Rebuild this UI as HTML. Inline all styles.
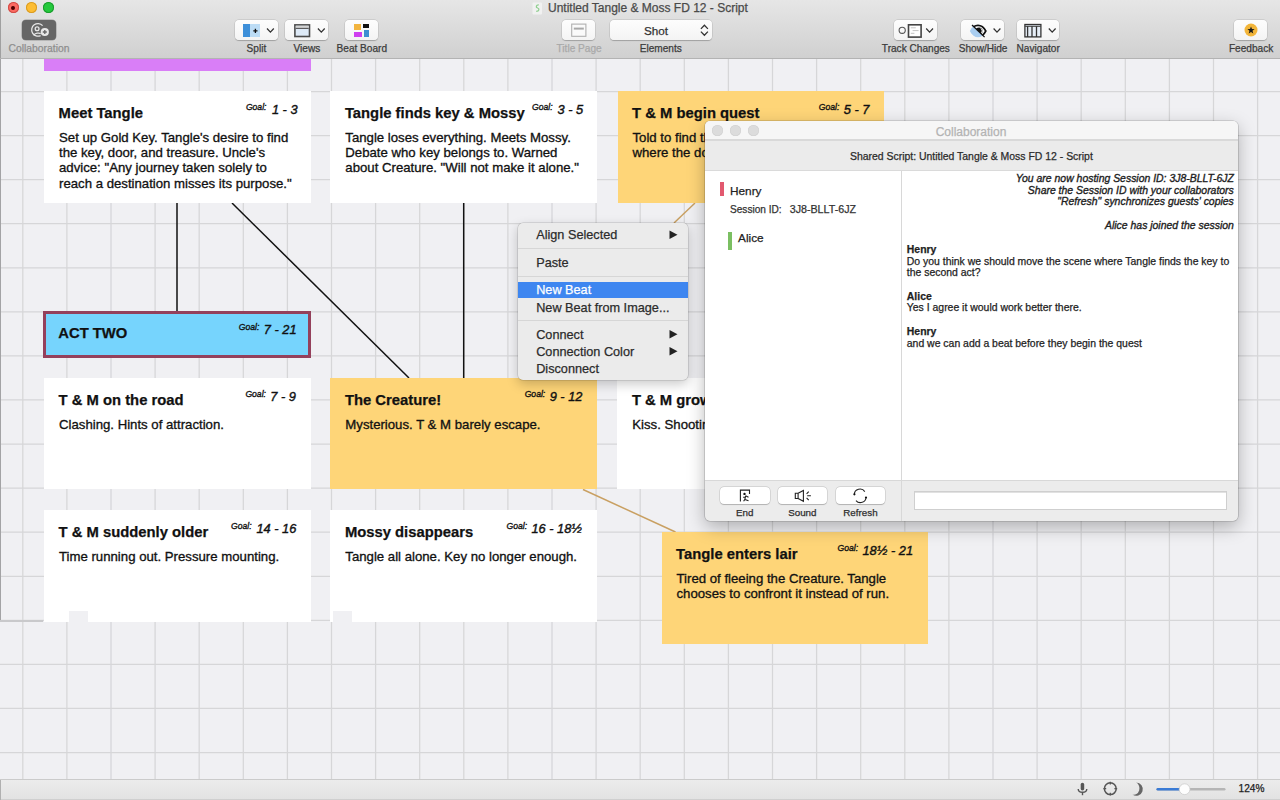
<!DOCTYPE html>
<html><head><meta charset="utf-8"><title>Beat Board</title>
<style>
html,body{margin:0;padding:0;width:1280px;height:800px;overflow:hidden;background:#f0f0f3;font-family:"Liberation Sans", sans-serif;}
.t{position:absolute;white-space:nowrap;-webkit-text-stroke:0.25px currentColor;}
.r{position:absolute;}
svg{position:absolute;left:0;top:0;}
</style></head><body>

<svg width="1280" height="800" style="left:0;top:0"><line x1="22.80" y1="59" x2="22.80" y2="779" stroke="#d6d6d8" stroke-width="1.25"/><line x1="66.90" y1="59" x2="66.90" y2="779" stroke="#d6d6d8" stroke-width="1.25"/><line x1="111.00" y1="59" x2="111.00" y2="779" stroke="#d6d6d8" stroke-width="1.25"/><line x1="155.10" y1="59" x2="155.10" y2="779" stroke="#d6d6d8" stroke-width="1.25"/><line x1="199.20" y1="59" x2="199.20" y2="779" stroke="#d6d6d8" stroke-width="1.25"/><line x1="243.30" y1="59" x2="243.30" y2="779" stroke="#d6d6d8" stroke-width="1.25"/><line x1="287.40" y1="59" x2="287.40" y2="779" stroke="#d6d6d8" stroke-width="1.25"/><line x1="331.50" y1="59" x2="331.50" y2="779" stroke="#d6d6d8" stroke-width="1.25"/><line x1="375.60" y1="59" x2="375.60" y2="779" stroke="#d6d6d8" stroke-width="1.25"/><line x1="419.70" y1="59" x2="419.70" y2="779" stroke="#d6d6d8" stroke-width="1.25"/><line x1="463.80" y1="59" x2="463.80" y2="779" stroke="#d6d6d8" stroke-width="1.25"/><line x1="507.90" y1="59" x2="507.90" y2="779" stroke="#d6d6d8" stroke-width="1.25"/><line x1="552.00" y1="59" x2="552.00" y2="779" stroke="#d6d6d8" stroke-width="1.25"/><line x1="596.10" y1="59" x2="596.10" y2="779" stroke="#d6d6d8" stroke-width="1.25"/><line x1="640.20" y1="59" x2="640.20" y2="779" stroke="#d6d6d8" stroke-width="1.25"/><line x1="684.30" y1="59" x2="684.30" y2="779" stroke="#d6d6d8" stroke-width="1.25"/><line x1="728.40" y1="59" x2="728.40" y2="779" stroke="#d6d6d8" stroke-width="1.25"/><line x1="772.50" y1="59" x2="772.50" y2="779" stroke="#d6d6d8" stroke-width="1.25"/><line x1="816.60" y1="59" x2="816.60" y2="779" stroke="#d6d6d8" stroke-width="1.25"/><line x1="860.70" y1="59" x2="860.70" y2="779" stroke="#d6d6d8" stroke-width="1.25"/><line x1="904.80" y1="59" x2="904.80" y2="779" stroke="#d6d6d8" stroke-width="1.25"/><line x1="948.90" y1="59" x2="948.90" y2="779" stroke="#d6d6d8" stroke-width="1.25"/><line x1="993.00" y1="59" x2="993.00" y2="779" stroke="#d6d6d8" stroke-width="1.25"/><line x1="1037.10" y1="59" x2="1037.10" y2="779" stroke="#d6d6d8" stroke-width="1.25"/><line x1="1081.20" y1="59" x2="1081.20" y2="779" stroke="#d6d6d8" stroke-width="1.25"/><line x1="1125.30" y1="59" x2="1125.30" y2="779" stroke="#d6d6d8" stroke-width="1.25"/><line x1="1169.40" y1="59" x2="1169.40" y2="779" stroke="#d6d6d8" stroke-width="1.25"/><line x1="1213.50" y1="59" x2="1213.50" y2="779" stroke="#d6d6d8" stroke-width="1.25"/><line x1="1257.60" y1="59" x2="1257.60" y2="779" stroke="#d6d6d8" stroke-width="1.25"/><line x1="0" y1="91.50" x2="1280" y2="91.50" stroke="#d6d6d8" stroke-width="1.25"/><line x1="0" y1="135.57" x2="1280" y2="135.57" stroke="#d6d6d8" stroke-width="1.25"/><line x1="0" y1="179.64" x2="1280" y2="179.64" stroke="#d6d6d8" stroke-width="1.25"/><line x1="0" y1="223.71" x2="1280" y2="223.71" stroke="#d6d6d8" stroke-width="1.25"/><line x1="0" y1="267.78" x2="1280" y2="267.78" stroke="#d6d6d8" stroke-width="1.25"/><line x1="0" y1="311.85" x2="1280" y2="311.85" stroke="#d6d6d8" stroke-width="1.25"/><line x1="0" y1="355.92" x2="1280" y2="355.92" stroke="#d6d6d8" stroke-width="1.25"/><line x1="0" y1="399.99" x2="1280" y2="399.99" stroke="#d6d6d8" stroke-width="1.25"/><line x1="0" y1="444.06" x2="1280" y2="444.06" stroke="#d6d6d8" stroke-width="1.25"/><line x1="0" y1="488.13" x2="1280" y2="488.13" stroke="#d6d6d8" stroke-width="1.25"/><line x1="0" y1="532.20" x2="1280" y2="532.20" stroke="#d6d6d8" stroke-width="1.25"/><line x1="0" y1="576.27" x2="1280" y2="576.27" stroke="#d6d6d8" stroke-width="1.25"/><line x1="0" y1="620.34" x2="1280" y2="620.34" stroke="#d6d6d8" stroke-width="1.25"/><line x1="0" y1="664.41" x2="1280" y2="664.41" stroke="#d6d6d8" stroke-width="1.25"/><line x1="0" y1="708.48" x2="1280" y2="708.48" stroke="#d6d6d8" stroke-width="1.25"/><line x1="0" y1="752.55" x2="1280" y2="752.55" stroke="#d6d6d8" stroke-width="1.25"/></svg>
<div class="r" style="left:0.00px;top:0.00px;width:1.00px;height:621.00px;background:#a3a3a5;"></div>
<div class="r" style="left:0.00px;top:620.00px;width:43.00px;height:1.50px;background:#c9c9cb;"></div>
<div class="r" style="left:44.00px;top:59.00px;width:266.50px;height:11.50px;background:#d97ef7;"></div>
<svg width="1280" height="800">
<line x1="177" y1="203" x2="177" y2="311" stroke="#111" stroke-width="1.5"/>
<line x1="232" y1="203" x2="409" y2="378" stroke="#111" stroke-width="1.5"/>
<line x1="463.7" y1="203" x2="463.7" y2="378" stroke="#111" stroke-width="1.5"/>
<line x1="695" y1="203" x2="674" y2="223" stroke="#c9a062" stroke-width="1.5"/>
<line x1="583" y1="489.5" x2="675.5" y2="532" stroke="#c9a062" stroke-width="1.5"/>
</svg>
<div class="r" style="left:44.00px;top:91.00px;width:266.50px;height:111.50px;background:#ffffff;"></div>
<div class="t" style="top:105.97px;font-size:14.8px;line-height:14.8px;color:#111;font-weight:bold;left:58.60px;">Meet Tangle</div>
<div class="t" style="top:103.22px;font-size:8.6px;line-height:8.6px;color:#111;font-style:italic;left:245.90px;-webkit-text-stroke:0.35px #111;">Goal:</div>
<div class="t" style="top:104.36px;font-size:12.8px;line-height:12.8px;color:#111;font-style:italic;left:271.90px;-webkit-text-stroke:0.4px #111;">1 - 3</div>
<div class="t" style="top:130.62px;font-size:13.2px;line-height:13.2px;color:#111;left:59.00px;-webkit-text-stroke:0.32px #111;">Set up Gold Key. Tangle's desire to find</div>
<div class="t" style="top:145.92px;font-size:13.2px;line-height:13.2px;color:#111;left:59.00px;-webkit-text-stroke:0.32px #111;">the key, door, and treasure. Uncle's</div>
<div class="t" style="top:161.22px;font-size:13.2px;line-height:13.2px;color:#111;left:59.00px;-webkit-text-stroke:0.32px #111;">advice: "Any journey taken solely to</div>
<div class="t" style="top:176.52px;font-size:13.2px;line-height:13.2px;color:#111;left:59.00px;-webkit-text-stroke:0.32px #111;">reach a destination misses its purpose."</div>
<div class="r" style="left:330.30px;top:91.00px;width:266.70px;height:111.50px;background:#ffffff;"></div>
<div class="t" style="top:105.97px;font-size:14.8px;line-height:14.8px;color:#111;font-weight:bold;left:344.90px;">Tangle finds key &amp; Mossy</div>
<div class="t" style="top:103.22px;font-size:8.6px;line-height:8.6px;color:#111;font-style:italic;left:532.00px;-webkit-text-stroke:0.35px #111;">Goal:</div>
<div class="t" style="top:104.36px;font-size:12.8px;line-height:12.8px;color:#111;font-style:italic;left:557.50px;-webkit-text-stroke:0.4px #111;">3 - 5</div>
<div class="t" style="top:130.62px;font-size:13.2px;line-height:13.2px;color:#111;left:345.30px;-webkit-text-stroke:0.32px #111;">Tangle loses everything. Meets Mossy.</div>
<div class="t" style="top:145.92px;font-size:13.2px;line-height:13.2px;color:#111;left:345.30px;-webkit-text-stroke:0.32px #111;">Debate who key belongs to. Warned</div>
<div class="t" style="top:161.22px;font-size:13.2px;line-height:13.2px;color:#111;left:345.30px;-webkit-text-stroke:0.32px #111;">about Creature. "Will not make it alone."</div>
<div class="r" style="left:617.50px;top:91.00px;width:266.50px;height:111.50px;background:#fed578;"></div>
<div class="t" style="top:105.97px;font-size:14.8px;line-height:14.8px;color:#111;font-weight:bold;left:632.10px;">T &amp; M begin quest</div>
<div class="t" style="top:103.22px;font-size:8.6px;line-height:8.6px;color:#111;font-style:italic;left:818.75px;-webkit-text-stroke:0.35px #111;">Goal:</div>
<div class="t" style="top:104.36px;font-size:12.8px;line-height:12.8px;color:#111;font-style:italic;left:843.75px;-webkit-text-stroke:0.4px #111;">5 - 7</div>
<div class="t" style="top:130.62px;font-size:13.2px;line-height:13.2px;color:#111;left:632.50px;-webkit-text-stroke:0.32px #111;">Told to find the key and the door,</div>
<div class="t" style="top:145.92px;font-size:13.2px;line-height:13.2px;color:#111;left:632.50px;-webkit-text-stroke:0.32px #111;">where the door leads.</div>
<div class="r" style="left:43.00px;top:311.00px;width:268.30px;height:47.00px;background:#76d4fd;box-sizing:border-box;border:3.8px solid #94405b;"></div>
<div class="t" style="top:326.07px;font-size:14.8px;line-height:14.8px;color:#111;font-weight:bold;left:58.30px;">ACT TWO</div>
<div class="t" style="top:323.12px;font-size:8.6px;line-height:8.6px;color:#111;font-style:italic;left:238.80px;-webkit-text-stroke:0.35px #111;">Goal:</div>
<div class="t" style="top:323.66px;font-size:12.8px;line-height:12.8px;color:#111;font-style:italic;left:263.80px;-webkit-text-stroke:0.4px #111;">7 - 21</div>
<div class="r" style="left:44.00px;top:378.00px;width:266.50px;height:111.00px;background:#ffffff;"></div>
<div class="t" style="top:392.97px;font-size:14.8px;line-height:14.8px;color:#111;font-weight:bold;left:58.60px;">T &amp; M on the road</div>
<div class="t" style="top:390.22px;font-size:8.6px;line-height:8.6px;color:#111;font-style:italic;left:245.40px;-webkit-text-stroke:0.35px #111;">Goal:</div>
<div class="t" style="top:391.36px;font-size:12.8px;line-height:12.8px;color:#111;font-style:italic;left:270.30px;-webkit-text-stroke:0.4px #111;">7 - 9</div>
<div class="t" style="top:417.62px;font-size:13.2px;line-height:13.2px;color:#111;left:59.00px;-webkit-text-stroke:0.32px #111;">Clashing. Hints of attraction.</div>
<div class="r" style="left:330.30px;top:378.00px;width:266.70px;height:111.00px;background:#fed578;"></div>
<div class="t" style="top:392.97px;font-size:14.8px;line-height:14.8px;color:#111;font-weight:bold;left:344.90px;">The Creature!</div>
<div class="t" style="top:390.22px;font-size:8.6px;line-height:8.6px;color:#111;font-style:italic;left:524.70px;-webkit-text-stroke:0.35px #111;">Goal:</div>
<div class="t" style="top:391.36px;font-size:12.8px;line-height:12.8px;color:#111;font-style:italic;left:549.70px;-webkit-text-stroke:0.4px #111;">9 - 12</div>
<div class="t" style="top:417.62px;font-size:13.2px;line-height:13.2px;color:#111;left:345.30px;-webkit-text-stroke:0.32px #111;">Mysterious. T &amp; M barely escape.</div>
<div class="r" style="left:617.30px;top:378.00px;width:266.70px;height:111.00px;background:#ffffff;"></div>
<div class="t" style="top:392.97px;font-size:14.8px;line-height:14.8px;color:#111;font-weight:bold;left:631.90px;">T &amp; M grow closer</div>
<div class="t" style="top:390.22px;font-size:8.6px;line-height:8.6px;color:#111;font-style:italic;left:818.00px;-webkit-text-stroke:0.35px #111;">Goal:</div>
<div class="t" style="top:391.36px;font-size:12.8px;line-height:12.8px;color:#111;font-style:italic;left:843.00px;-webkit-text-stroke:0.4px #111;">10 - 12</div>
<div class="t" style="top:417.62px;font-size:13.2px;line-height:13.2px;color:#111;left:632.30px;-webkit-text-stroke:0.32px #111;">Kiss. Shooting star.</div>
<div class="r" style="left:44.00px;top:510.00px;width:266.50px;height:111.50px;background:#ffffff;"></div>
<div class="t" style="top:524.97px;font-size:14.8px;line-height:14.8px;color:#111;font-weight:bold;left:58.60px;">T &amp; M suddenly older</div>
<div class="t" style="top:522.22px;font-size:8.6px;line-height:8.6px;color:#111;font-style:italic;left:231.00px;-webkit-text-stroke:0.35px #111;">Goal:</div>
<div class="t" style="top:523.36px;font-size:12.8px;line-height:12.8px;color:#111;font-style:italic;left:256.50px;-webkit-text-stroke:0.4px #111;">14 - 16</div>
<div class="t" style="top:549.62px;font-size:13.2px;line-height:13.2px;color:#111;left:59.00px;-webkit-text-stroke:0.32px #111;">Time running out. Pressure mounting.</div>
<div class="r" style="left:330.30px;top:510.00px;width:266.70px;height:111.50px;background:#ffffff;"></div>
<div class="t" style="top:524.97px;font-size:14.8px;line-height:14.8px;color:#111;font-weight:bold;left:344.90px;">Mossy disappears</div>
<div class="t" style="top:522.22px;font-size:8.6px;line-height:8.6px;color:#111;font-style:italic;left:506.50px;-webkit-text-stroke:0.35px #111;">Goal:</div>
<div class="t" style="top:523.36px;font-size:12.8px;line-height:12.8px;color:#111;font-style:italic;left:531.50px;-webkit-text-stroke:0.4px #111;">16 - 18&#189;</div>
<div class="t" style="top:549.62px;font-size:13.2px;line-height:13.2px;color:#111;left:345.30px;-webkit-text-stroke:0.32px #111;">Tangle all alone. Key no longer enough.</div>
<div class="r" style="left:661.50px;top:532.00px;width:266.00px;height:111.50px;background:#fed578;"></div>
<div class="t" style="top:546.97px;font-size:14.8px;line-height:14.8px;color:#111;font-weight:bold;left:676.10px;">Tangle enters lair</div>
<div class="t" style="top:544.22px;font-size:8.6px;line-height:8.6px;color:#111;font-style:italic;left:837.50px;-webkit-text-stroke:0.35px #111;">Goal:</div>
<div class="t" style="top:545.36px;font-size:12.8px;line-height:12.8px;color:#111;font-style:italic;left:862.50px;-webkit-text-stroke:0.4px #111;">18&#189; - 21</div>
<div class="t" style="top:571.62px;font-size:13.2px;line-height:13.2px;color:#111;left:676.50px;-webkit-text-stroke:0.32px #111;">Tired of fleeing the Creature. Tangle</div>
<div class="t" style="top:586.92px;font-size:13.2px;line-height:13.2px;color:#111;left:676.50px;-webkit-text-stroke:0.32px #111;">chooses to confront it instead of run.</div>
<div class="r" style="left:69.00px;top:611.00px;width:19.00px;height:10.50px;background:#f0f0f3;"></div>
<div class="r" style="left:333.00px;top:611.00px;width:19.00px;height:10.50px;background:#f0f0f3;"></div>
<div class="r" style="left:517.50px;top:223.00px;width:170.50px;height:157.00px;background:#ebebeb;border-radius:5px;box-shadow:0 0 0 0.5px rgba(0,0,0,0.18),0 4px 12px rgba(0,0,0,0.22);"></div>
<div class="r" style="left:517.50px;top:248.20px;width:170.50px;height:1.00px;background:#d6d6d6;"></div>
<div class="r" style="left:517.50px;top:275.90px;width:170.50px;height:1.00px;background:#d6d6d6;"></div>
<div class="r" style="left:517.50px;top:319.70px;width:170.50px;height:1.00px;background:#d6d6d6;"></div>
<div class="r" style="left:517.50px;top:282.00px;width:170.50px;height:15.70px;background:#3e86f0;"></div>
<div class="t" style="top:229.35px;font-size:12.7px;line-height:12.7px;color:#2c2c2c;left:536.20px;">Align Selected</div>
<svg width="1280" height="800"><path d="M669.5 230.40 L677.5 234.70 L669.5 239.00 Z" fill="#222"/></svg>
<div class="t" style="top:256.85px;font-size:12.7px;line-height:12.7px;color:#2c2c2c;left:536.20px;">Paste</div>
<div class="t" style="top:284.25px;font-size:12.7px;line-height:12.7px;color:#ffffff;left:536.20px;">New Beat</div>
<div class="t" style="top:301.55px;font-size:12.7px;line-height:12.7px;color:#2c2c2c;left:536.20px;">New Beat from Image...</div>
<div class="t" style="top:328.95px;font-size:12.7px;line-height:12.7px;color:#2c2c2c;left:536.20px;">Connect</div>
<svg width="1280" height="800"><path d="M669.5 330.00 L677.5 334.30 L669.5 338.60 Z" fill="#222"/></svg>
<div class="t" style="top:345.85px;font-size:12.7px;line-height:12.7px;color:#2c2c2c;left:536.20px;">Connection Color</div>
<svg width="1280" height="800"><path d="M669.5 346.90 L677.5 351.20 L669.5 355.50 Z" fill="#222"/></svg>
<div class="t" style="top:363.15px;font-size:12.7px;line-height:12.7px;color:#2c2c2c;left:536.20px;">Disconnect</div>
<div class="r" style="left:705.00px;top:121.20px;width:533.00px;height:399.60px;background:#ececec;border-radius:5px;box-shadow:0 0 0 0.6px rgba(0,0,0,0.22),0 6px 18px rgba(0,0,0,0.28);overflow:hidden;"></div>
<div class="r" style="left:705.00px;top:121.20px;width:533.00px;height:18.80px;background:#f6f6f6;border-radius:5px 5px 0 0;"></div>
<div class="r" style="left:705.00px;top:139.40px;width:533.00px;height:1.20px;background:#d9d9d9;"></div>
<div class="r" style="left:711.70px;top:125.00px;width:11.2px;height:11.2px;border-radius:50%;background:#dcdcdc;box-shadow:inset 0 0 0 0.5px #cfcfcf;"></div>
<div class="r" style="left:729.50px;top:125.00px;width:11.2px;height:11.2px;border-radius:50%;background:#dcdcdc;box-shadow:inset 0 0 0 0.5px #cfcfcf;"></div>
<div class="r" style="left:747.50px;top:125.00px;width:11.2px;height:11.2px;border-radius:50%;background:#dcdcdc;box-shadow:inset 0 0 0 0.5px #cfcfcf;"></div>
<div class="t" style="top:125.64px;font-size:12px;line-height:12px;color:#b3b3b3;left:671.00px;width:600px;text-align:center;">Collaboration</div>
<div class="r" style="left:705.00px;top:140.60px;width:533.00px;height:29.40px;background:#ebebeb;"></div>
<div class="r" style="left:705.00px;top:170.00px;width:533.00px;height:1.00px;background:#dadada;"></div>
<div class="t" style="top:152.05px;font-size:10.45px;line-height:10.45px;color:#2b2b2b;left:671.40px;width:600px;text-align:center;">Shared Script: Untitled Tangle &amp; Moss FD 12 - Script</div>
<div class="r" style="left:705.00px;top:171.00px;width:196.00px;height:308.60px;background:#ffffff;"></div>
<div class="r" style="left:902.20px;top:171.00px;width:335.80px;height:308.60px;background:#ffffff;"></div>
<div class="r" style="left:901.00px;top:171.00px;width:1.20px;height:350.00px;background:#d8d8d8;"></div>
<div class="r" style="left:705.00px;top:479.60px;width:533.00px;height:1.00px;background:#d8d8d8;"></div>
<div class="r" style="left:720.00px;top:182.30px;width:4.40px;height:13.70px;background:#e2596f;"></div>
<div class="t" style="top:185.51px;font-size:11.8px;line-height:11.8px;color:#222;left:730.00px;">Henry</div>
<div class="t" style="top:204.55px;font-size:10.1px;line-height:10.1px;color:#333;left:730.00px;">Session ID:</div>
<div class="t" style="top:204.04px;font-size:10.7px;line-height:10.7px;color:#333;left:789.70px;">3J8-BLLT-6JZ</div>
<div class="r" style="left:728.10px;top:231.90px;width:4.40px;height:17.80px;background:#7bbf62;"></div>
<div class="t" style="top:232.81px;font-size:11.8px;line-height:11.8px;color:#222;left:738.10px;">Alice</div>
<div class="t" style="top:174.05px;font-size:10.45px;line-height:10.45px;color:#1e1e1e;font-style:italic;right:46.20px;text-align:right;-webkit-text-stroke:0.35px #1e1e1e;">You are now hosting Session ID: 3J8-BLLT-6JZ</div>
<div class="t" style="top:185.65px;font-size:10.45px;line-height:10.45px;color:#1e1e1e;font-style:italic;right:46.20px;text-align:right;-webkit-text-stroke:0.35px #1e1e1e;">Share the Session ID with your collaborators</div>
<div class="t" style="top:197.25px;font-size:10.45px;line-height:10.45px;color:#1e1e1e;font-style:italic;right:46.20px;text-align:right;-webkit-text-stroke:0.35px #1e1e1e;">"Refresh" synchronizes guests' copies</div>
<div class="t" style="top:221.35px;font-size:10.45px;line-height:10.45px;color:#1e1e1e;font-style:italic;right:46.20px;text-align:right;-webkit-text-stroke:0.35px #1e1e1e;">Alice has joined the session</div>
<div class="t" style="top:245.35px;font-size:10.45px;line-height:10.45px;color:#1e1e1e;font-weight:bold;left:906.80px;">Henry</div>
<div class="t" style="top:256.65px;font-size:10.45px;line-height:10.45px;color:#1e1e1e;left:906.80px;">Do you think we should move the scene where Tangle finds the key to</div>
<div class="t" style="top:268.35px;font-size:10.45px;line-height:10.45px;color:#1e1e1e;left:906.80px;">the second act?</div>
<div class="t" style="top:291.95px;font-size:10.45px;line-height:10.45px;color:#1e1e1e;font-weight:bold;left:906.80px;">Alice</div>
<div class="t" style="top:303.35px;font-size:10.45px;line-height:10.45px;color:#1e1e1e;left:906.80px;">Yes I agree it would work better there.</div>
<div class="t" style="top:327.15px;font-size:10.45px;line-height:10.45px;color:#1e1e1e;font-weight:bold;left:906.80px;">Henry</div>
<div class="t" style="top:338.85px;font-size:10.45px;line-height:10.45px;color:#1e1e1e;left:906.80px;">and we can add a beat before they begin the quest</div>
<div class="r" style="left:719.80px;top:487.00px;width:49.80px;height:17.00px;background:#ffffff;border-radius:4px;box-shadow:0 0 0 0.5px rgba(0,0,0,0.16),0 0.5px 1px rgba(0,0,0,0.18);"></div>
<svg width="1280" height="800"><g fill="none" stroke="#222" stroke-width="1.1">
<path d="M740.4 501.6 V490.1 H749.5 V494"/>
<path d="M745.6 495.8 L744.9 499.4 M743.1 497.3 H745.2 M745.6 495.8 L748.5 497.3 M744.9 499.4 L743.6 501.3 M744.9 499.4 L748.5 500.8"/>
</g><circle cx="744.5" cy="493.9" r="1.2" fill="#111"/></svg>
<div class="t" style="top:508.00px;font-size:9.8px;line-height:9.8px;color:#2e2e2e;left:444.70px;width:600px;text-align:center;">End</div>
<div class="r" style="left:777.70px;top:487.00px;width:49.30px;height:17.00px;background:#ffffff;border-radius:4px;box-shadow:0 0 0 0.5px rgba(0,0,0,0.16),0 0.5px 1px rgba(0,0,0,0.18);"></div>
<svg width="1280" height="800"><g fill="none" stroke="#222" stroke-width="1.1">
<path d="M795.3 493.2 H798.1 V498.5 H795.3 Z M798.1 493.2 L803.4 490.4 V501.3 L798.1 498.5"/>
<path d="M806.6 493.8 L808.7 491.6 M807.2 495.8 H810.9 M806.6 497.9 L808.7 500.2"/>
</g></svg>
<div class="t" style="top:508.00px;font-size:9.8px;line-height:9.8px;color:#2e2e2e;left:502.35px;width:600px;text-align:center;">Sound</div>
<div class="r" style="left:835.70px;top:487.00px;width:49.50px;height:17.00px;background:#ffffff;border-radius:4px;box-shadow:0 0 0 0.5px rgba(0,0,0,0.16),0 0.5px 1px rgba(0,0,0,0.18);"></div>
<svg width="1280" height="800"><g fill="none" stroke="#222" stroke-width="1.1">
<path d="M854.4 494.3 A5.6 5.2 0 0 1 864.8 491.6"/>
<path d="M866 497.5 A5.6 5.2 0 0 1 856 500.6"/>
</g><circle cx="854.4" cy="494.3" r="1.1" fill="#111"/><circle cx="866" cy="497.5" r="1.1" fill="#111"/></svg>
<div class="t" style="top:508.00px;font-size:9.8px;line-height:9.8px;color:#2e2e2e;left:560.45px;width:600px;text-align:center;">Refresh</div>
<div class="r" style="left:913.50px;top:491.40px;width:313.20px;height:18.40px;background:#ffffff;box-sizing:border-box;border:1px solid #cfcfcf;box-shadow:inset 0 0.5px 0 #c4c4c4;"></div>
<div class="r" style="left:0.00px;top:0.00px;width:1280.00px;height:58.00px;background:linear-gradient(#e6e6e6,#d0d0d0);"></div>
<div class="r" style="left:0.00px;top:57.60px;width:1280.00px;height:1.20px;background:#b3b3b3;"></div>
<div class="r" style="left:0.00px;top:0.00px;width:1.00px;height:58.00px;background:#a0a0a0;"></div>
<div class="r" style="left:7.70px;top:2.30px;width:11.2px;height:11.2px;border-radius:50%;background:#fc6a62;box-shadow:inset 0 0 0 1px #cf4b45;"></div>
<div class="r" style="left:25.50px;top:2.30px;width:11.2px;height:11.2px;border-radius:50%;background:#fdbd33;box-shadow:inset 0 0 0 1px #d99b22;"></div>
<div class="r" style="left:43.20px;top:2.30px;width:11.2px;height:11.2px;border-radius:50%;background:#25c93d;box-shadow:inset 0 0 0 1px #1a9a2c;"></div>
<div class="r" style="left:11.4px;top:6px;width:3.8px;height:3.8px;border-radius:50%;background:#4d0000;"></div>
<svg width="1280" height="800"><rect x="532.5" y="2.5" width="9.5" height="12" rx="1" fill="#f1f1f1"/><path d="M538.8 4.8 C536 4.6 535.6 7.4 537.6 8 C539.6 8.6 539.4 11.2 536.2 11.4" fill="none" stroke="#8fcf8f" stroke-width="1.3"/></svg>
<div class="t" style="top:2.04px;font-size:12px;line-height:12px;color:#4a4a4a;left:548.00px;">Untitled Tangle &amp; Moss FD 12 - Script</div>
<div class="r" style="left:22.00px;top:20.20px;width:34.00px;height:19.80px;background:#666666;border-radius:4px;box-shadow:0 0 0 0.5px rgba(0,0,0,0.3);"></div>
<svg width="1280" height="800"><g fill="none" stroke="#e6e6e6" stroke-width="1.3">
<path d="M42.6 25.6 A6.3 6.3 0 1 0 40.6 35.6"/>
<circle cx="37.1" cy="28.8" r="1.9"/>
<path d="M34 35.3 C34.6 32.8 39.6 32.6 40.6 33.8"/>
</g><circle cx="44.8" cy="32" r="4.1" fill="#e8e8e8"/>
<path d="M42.8 32 H46.8 M44.8 30 V34" stroke="#666" stroke-width="1.3"/></svg>
<div class="t" style="top:43.74px;font-size:10.35px;line-height:10.35px;color:#8e8e8e;left:-261.00px;width:600px;text-align:center;">Collaboration</div>
<div class="r" style="left:235.00px;top:20.40px;width:43.30px;height:19.60px;background:linear-gradient(#fdfdfd,#f4f4f4);border-radius:4px;box-shadow:0 0 0 0.5px rgba(0,0,0,0.12),0 0.5px 1px rgba(0,0,0,0.2);"></div>
<div class="r" style="left:242.90px;top:24.30px;width:7.20px;height:12.50px;background:#3d8fd9;"></div>
<div class="r" style="left:250.10px;top:24.30px;width:9.60px;height:12.50px;background:#bcdcf5;"></div>
<svg width="1280" height="800"><path d="M253.3 30.9 H257.5 M255.4 28.8 V33" stroke="#111" stroke-width="1.3"/></svg>
<svg width="1280" height="800"><path d="M267.00 28.50 L270.40 32.10 L273.80 28.50" fill="none" stroke="#333" stroke-width="1.25"/></svg>
<div class="t" style="top:43.95px;font-size:10.1px;line-height:10.1px;color:#3c3c3c;left:-43.60px;width:600px;text-align:center;">Split</div>
<div class="r" style="left:285.40px;top:20.40px;width:42.90px;height:19.60px;background:linear-gradient(#fdfdfd,#f4f4f4);border-radius:4px;box-shadow:0 0 0 0.5px rgba(0,0,0,0.12),0 0.5px 1px rgba(0,0,0,0.2);"></div>
<svg width="1280" height="800"><rect x="294.9" y="24.9" width="14.6" height="11.6" fill="#dde9f6" stroke="#4a4a4a" stroke-width="1.6"/>
<rect x="295.7" y="25.7" width="13" height="2.2" fill="#d4d4d4"/><path d="M295.7 28.4 H308.7" stroke="#555" stroke-width="1.1"/></svg>
<svg width="1280" height="800"><path d="M317.90 28.50 L321.30 32.10 L324.70 28.50" fill="none" stroke="#333" stroke-width="1.25"/></svg>
<div class="t" style="top:43.95px;font-size:10.1px;line-height:10.1px;color:#3c3c3c;left:6.90px;width:600px;text-align:center;">Views</div>
<div class="r" style="left:345.20px;top:20.40px;width:33.20px;height:19.60px;background:linear-gradient(#fdfdfd,#f4f4f4);border-radius:4px;box-shadow:0 0 0 0.5px rgba(0,0,0,0.12),0 0.5px 1px rgba(0,0,0,0.2);"></div>
<div class="r" style="left:354.00px;top:23.90px;width:7.10px;height:6.50px;background:#f2b43f;"></div>
<div class="r" style="left:363.00px;top:23.60px;width:6.10px;height:4.20px;background:#111111;"></div>
<div class="r" style="left:354.00px;top:32.30px;width:8.00px;height:4.45px;background:#cf3ff0;"></div>
<div class="r" style="left:363.90px;top:30.00px;width:5.20px;height:6.75px;background:#3d8fd2;"></div>
<div class="t" style="top:43.95px;font-size:10.1px;line-height:10.1px;color:#3c3c3c;left:61.80px;width:600px;text-align:center;">Beat Board</div>
<div class="r" style="left:562.00px;top:20.40px;width:33.00px;height:19.60px;background:linear-gradient(#fdfdfd,#f4f4f4);border-radius:4px;box-shadow:0 0 0 0.5px rgba(0,0,0,0.12),0 0.5px 1px rgba(0,0,0,0.2);"></div>
<svg width="1280" height="800"><rect x="571.7" y="24.1" width="14.2" height="12.2" fill="#fafafa" stroke="#b0b0b0" stroke-width="1.1"/><path d="M573.8 28.6 H583.8" stroke="#a8a8a8" stroke-width="2"/></svg>
<div class="t" style="top:43.95px;font-size:10.1px;line-height:10.1px;color:#a9a9a9;left:279.10px;width:600px;text-align:center;">Title Page</div>
<div class="r" style="left:609.70px;top:20.40px;width:102.00px;height:19.60px;background:linear-gradient(#fdfdfd,#f4f4f4);border-radius:4px;box-shadow:0 0 0 0.5px rgba(0,0,0,0.12),0 0.5px 1px rgba(0,0,0,0.2);"></div>
<div class="t" style="top:25.09px;font-size:11.7px;line-height:11.7px;color:#333;left:356.00px;width:600px;text-align:center;">Shot</div>
<svg width="1280" height="800"><path d="M700.9 28.9 L704.4 25.3 L707.9 28.9 M700.9 31.6 L704.4 35.2 L707.9 31.6" fill="none" stroke="#333" stroke-width="1.3"/></svg>
<div class="t" style="top:43.95px;font-size:10.1px;line-height:10.1px;color:#3c3c3c;left:360.80px;width:600px;text-align:center;">Elements</div>
<div class="r" style="left:894.20px;top:20.40px;width:43.00px;height:19.60px;background:linear-gradient(#fdfdfd,#f4f4f4);border-radius:4px;box-shadow:0 0 0 0.5px rgba(0,0,0,0.12),0 0.5px 1px rgba(0,0,0,0.2);"></div>
<svg width="1280" height="800"><circle cx="902.2" cy="30.3" r="3.1" fill="none" stroke="#555" stroke-width="1.1"/>
<rect x="908.5" y="24.8" width="12.6" height="12.3" fill="#fff" stroke="#444" stroke-width="1.6"/>
<path d="M910.8 27.8 H915.8 M912.6 30.6 H918.6 M910.8 33.3 H914.4" stroke="#c4c4c4" stroke-width="1"/></svg>
<svg width="1280" height="800"><path d="M926.20 28.50 L929.60 32.10 L933.00 28.50" fill="none" stroke="#333" stroke-width="1.25"/></svg>
<div class="t" style="top:43.95px;font-size:10.1px;line-height:10.1px;color:#3c3c3c;left:615.90px;width:600px;text-align:center;">Track Changes</div>
<div class="r" style="left:961.40px;top:20.40px;width:43.00px;height:19.60px;background:linear-gradient(#fdfdfd,#f4f4f4);border-radius:4px;box-shadow:0 0 0 0.5px rgba(0,0,0,0.12),0 0.5px 1px rgba(0,0,0,0.2);"></div>
<svg width="1280" height="800"><defs>
<clipPath id="eyeA"><polygon points="960,13.5 1000,51.9 1000,5 960,5"/></clipPath>
<clipPath id="eyeB"><polygon points="960,13.5 1000,51.9 1000,60 960,60"/></clipPath></defs>
<g clip-path="url(#eyeB)"><path d="M969.8 31 C974 22.6 982 22.6 986.2 31 C982 39.4 974 39.4 969.8 31 Z" fill="#a9cdf0"/></g>
<g clip-path="url(#eyeA)"><path d="M970.2 31 C974 23.4 982 23.4 985.8 31 C982 38.6 974 38.6 970.2 31 Z" fill="#fff" stroke="#111" stroke-width="1.7"/>
<circle cx="979" cy="31" r="3.6" fill="#111"/><path d="M980.6 28.4 A3 3 0 0 1 981.3 33.2" fill="none" stroke="#fff" stroke-width="1"/></g>
<path d="M972 25 L984.6 37.1" stroke="#111" stroke-width="1.3"/>
</svg>
<svg width="1280" height="800"><path d="M993.60 28.50 L997.00 32.10 L1000.40 28.50" fill="none" stroke="#333" stroke-width="1.25"/></svg>
<div class="t" style="top:43.95px;font-size:10.1px;line-height:10.1px;color:#3c3c3c;left:683.10px;width:600px;text-align:center;">Show/Hide</div>
<div class="r" style="left:1016.90px;top:20.40px;width:42.60px;height:19.60px;background:linear-gradient(#fdfdfd,#f4f4f4);border-radius:4px;box-shadow:0 0 0 0.5px rgba(0,0,0,0.12),0 0.5px 1px rgba(0,0,0,0.2);"></div>
<svg width="1280" height="800"><rect x="1024.9" y="24.5" width="16" height="12.4" fill="#e6eef7" stroke="#333" stroke-width="1.3"/>
<path d="M1024.9 26.3 H1040.9" stroke="#444" stroke-width="1.1"/>
<path d="M1027.6 26.2 V36.9 M1032 26.2 V36.9 M1036.5 26.2 V36.9" stroke="#333" stroke-width="1.3"/></svg>
<svg width="1280" height="800"><path d="M1048.80 28.50 L1052.20 32.10 L1055.60 28.50" fill="none" stroke="#333" stroke-width="1.25"/></svg>
<div class="t" style="top:43.95px;font-size:10.1px;line-height:10.1px;color:#3c3c3c;left:738.20px;width:600px;text-align:center;">Navigator</div>
<div class="r" style="left:1234.40px;top:20.40px;width:33.10px;height:19.60px;background:linear-gradient(#fdfdfd,#f4f4f4);border-radius:4px;box-shadow:0 0 0 0.5px rgba(0,0,0,0.12),0 0.5px 1px rgba(0,0,0,0.2);"></div>
<svg width="1280" height="800"><circle cx="1251" cy="30" r="6.5" fill="#f2b53a"/>
<path d="M1251 26.4 L1252 29.1 L1254.6 29.1 L1252.5 30.8 L1253.3 33.6 L1251 31.9 L1248.7 33.6 L1249.5 30.8 L1247.4 29.1 L1250 29.1 Z" fill="#1a1a1a"/></svg>
<div class="t" style="top:43.95px;font-size:10.1px;line-height:10.1px;color:#3c3c3c;left:951.10px;width:600px;text-align:center;">Feedback</div>
<div class="r" style="left:0.00px;top:779.40px;width:1280.00px;height:20.60px;background:linear-gradient(#ececec,#e2e2e2);"></div>
<div class="r" style="left:0.00px;top:779.00px;width:1280.00px;height:1.30px;background:#cbcbcb;"></div>
<div class="r" style="left:0.00px;top:799.00px;width:1280.00px;height:1.00px;background:#cfcfcf;"></div>
<div class="r" style="left:0.00px;top:780.00px;width:1.00px;height:20.00px;background:#b0b0b0;"></div>
<svg width="1280" height="800">
<rect x="1080.7" y="782.8" width="3.5" height="7.6" rx="1.75" fill="#555"/>
<path d="M1078.2 789 C1078.4 793.4 1086.6 793.4 1086.8 789" fill="none" stroke="#555" stroke-width="1.4"/>
<path d="M1082.5 792.6 V795.2" stroke="#555" stroke-width="1.4"/>
<circle cx="1110.3" cy="788.7" r="5.9" fill="none" stroke="#555" stroke-width="1.5"/>
<path d="M1110.3 781.8 V784.6 M1110.3 792.8 V795.6 M1103.4 788.7 H1106.2 M1114.4 788.7 H1117.2" stroke="#555" stroke-width="1.3"/>
<path d="M1136.2 782.6 A6.6 6.6 0 1 1 1132.4 794.6 A5.6 6.4 0 0 0 1136.2 782.6 Z" fill="#666"/>
<rect x="1156.5" y="788" width="69" height="2.6" rx="1.3" fill="#b5b5b5"/>
<rect x="1156.5" y="788" width="28" height="2.6" rx="1.3" fill="#3a7bd5"/>
<circle cx="1184.6" cy="789.2" r="5.4" fill="#fdfdfd" stroke="#c9c9c9" stroke-width="0.7"/>
</svg>
<div class="t" style="top:784.25px;font-size:10.1px;line-height:10.1px;color:#222;left:951.50px;width:600px;text-align:center;">124%</div>
</body></html>
